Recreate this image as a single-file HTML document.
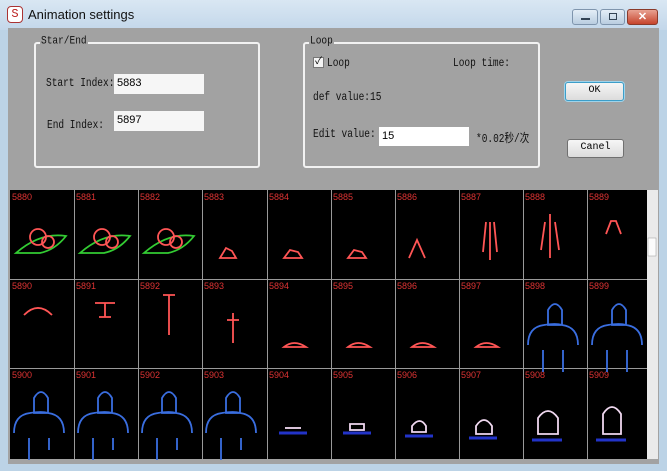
<!DOCTYPE html>
<html><head><meta charset="utf-8"><style>
*{margin:0;padding:0;box-sizing:border-box}
body{width:667px;height:471px;overflow:hidden;background:#bcd3e6;font-family:"Liberation Mono","Noto Sans CJK SC",monospace;position:relative}
.title{position:absolute;left:0;top:0;width:667px;height:30px;background:linear-gradient(#d9e7f3,#c3d7ea)}
.ttl{position:absolute;left:28px;top:7px;font:13px "Liberation Sans",sans-serif;color:#111}
.client{position:absolute;left:8px;top:28px;width:651px;height:436px;background:#a2a2a2}
.grp{position:absolute;border:2px solid #f2f2f2;border-radius:3px}
.lg{position:absolute;top:-9px;left:4px;background:#a2a2a2;font-size:9.5px;padding:0 1px;color:#111;transform:scaleY(1.2)}
.lbl{position:absolute;font-size:9.5px;color:#111;transform:scaleY(1.25);transform-origin:0 0;white-space:nowrap}
.inp{position:absolute;background:#f6f6f6;font:11px "Liberation Sans",sans-serif;padding:3px 3px}
.btn{position:absolute;background:linear-gradient(#f6f6f6,#dcdcdc);border:1px solid #707070;border-radius:3px;font-size:10px;text-align:center}
.wb{position:absolute;top:9px;height:16px;border:1px solid #7f95ad;border-radius:3px;background:linear-gradient(#e4eef7,#b9cde0)}
</style></head><body>
<div class="title"></div>
<div style="position:absolute;left:7px;top:6px;width:16px;height:17px;border:1px solid #a33;border-radius:4px;background:#fff;color:#b22;font-size:12px;text-align:center;line-height:15px">S</div>
<div class="ttl">Animation settings</div>
<div class="wb" style="left:572px;width:26px"><div style="position:absolute;left:8px;top:8px;width:9px;height:2px;background:#345"></div></div>
<div class="wb" style="left:600px;width:25px"><div style="position:absolute;left:8px;top:3px;width:8px;height:7px;border:1.5px solid #345"></div></div>
<div class="wb" style="left:627px;width:31px;background:linear-gradient(#e8a292,#c6442c);border-color:#8a3a2a;color:#fff;font:bold 11px 'Liberation Sans';text-align:center;line-height:14px">✕</div>
<div class="client"></div>
<div class="grp" style="left:34px;top:42px;width:226px;height:126px"><span class="lg">Star/End</span></div>
<div class="lbl" style="left:46px;top:76px">Start Index:</div>
<div class="inp" style="left:114px;top:74px;width:90px;height:20px">5883</div>
<div class="lbl" style="left:47px;top:118px">End Index:</div>
<div class="inp" style="left:114px;top:111px;width:90px;height:20px">5897</div>
<div class="grp" style="left:303px;top:42px;width:237px;height:126px"><span class="lg">Loop</span></div>
<div style="position:absolute;left:313px;top:57px;width:11px;height:11px;background:#f4f4f4;border:1px solid #777;font-size:10px;line-height:9px;text-align:center">✓</div>
<div class="lbl" style="left:327px;top:56px">Loop</div>
<div class="lbl" style="left:453px;top:56px">Loop time:</div>
<div class="lbl" style="left:313px;top:90px">def value:15</div>
<div class="lbl" style="left:313px;top:127px">Edit value:</div>
<div class="inp" style="left:379px;top:127px;width:90px;height:19px;background:#fff">15</div>
<div class="lbl" style="left:476px;top:128px">*0.02秒/次</div>
<div class="btn" style="left:565px;top:82px;width:59px;height:19px;line-height:16px;border-color:#3c9ec9;box-shadow:0 0 0 1px #9fd3ea">OK</div>
<div class="btn" style="left:567px;top:139px;width:57px;height:19px;line-height:16px">Canel</div>
<svg style="position:absolute;left:0;top:0" width="667" height="471">
<rect x="10" y="190" width="637" height="269" fill="#000"/>
<rect x="647" y="190" width="11" height="269" fill="#eaeaea"/>
<rect x="648" y="238" width="8" height="18" fill="#fbfbfb" stroke="#999" stroke-width="0.5"/>
<g stroke="#999" stroke-width="1">
<line x1="74.5" y1="190" x2="74.5" y2="459"/><line x1="138.5" y1="190" x2="138.5" y2="459"/><line x1="202.5" y1="190" x2="202.5" y2="459"/><line x1="267.5" y1="190" x2="267.5" y2="459"/><line x1="331.5" y1="190" x2="331.5" y2="459"/><line x1="395.5" y1="190" x2="395.5" y2="459"/><line x1="459.5" y1="190" x2="459.5" y2="459"/><line x1="523.5" y1="190" x2="523.5" y2="459"/><line x1="587.5" y1="190" x2="587.5" y2="459"/>
<line x1="10" y1="279.5" x2="647" y2="279.5"/><line x1="10" y1="368.5" x2="647" y2="368.5"/>
</g>
<g font-family="Liberation Sans" font-size="9" fill="#d33">
<text x="12" y="200">5880</text><text x="76" y="200">5881</text><text x="140" y="200">5882</text><text x="204" y="200">5883</text><text x="269" y="200">5884</text><text x="333" y="200">5885</text><text x="397" y="200">5886</text><text x="461" y="200">5887</text><text x="525" y="200">5888</text><text x="589" y="200">5889</text>
<text x="12" y="289">5890</text><text x="76" y="289">5891</text><text x="140" y="289">5892</text><text x="204" y="289">5893</text><text x="269" y="289">5894</text><text x="333" y="289">5895</text><text x="397" y="289">5896</text><text x="461" y="289">5897</text><text x="525" y="289">5898</text><text x="589" y="289">5899</text>
<text x="12" y="378">5900</text><text x="76" y="378">5901</text><text x="140" y="378">5902</text><text x="204" y="378">5903</text><text x="269" y="378">5904</text><text x="333" y="378">5905</text><text x="397" y="378">5906</text><text x="461" y="378">5907</text><text x="525" y="378">5908</text><text x="589" y="378">5909</text>
</g>
<g fill="none" stroke-width="1.8">
<g stroke="#3c3"><path d="M16 253 Q40 232 66 236 Q55 250 40 253 Z"/><path d="M80 253 Q104 232 130 236 Q119 250 104 253 Z"/><path d="M144 253 Q168 232 194 236 Q183 250 168 253 Z"/></g>
<g stroke="#f55">
<circle cx="38" cy="237" r="8"/><circle cx="48" cy="242" r="6"/><circle cx="102" cy="237" r="8"/><circle cx="112" cy="242" r="6"/><circle cx="166" cy="237" r="8"/><circle cx="176" cy="242" r="6"/>
<path d="M220 258 l6-10 l6 3 l4 7 z"/><path d="M284 258 l6-8 l8 2 l4 6 z"/><path d="M348 258 l6-8 l8 2 l4 6 z"/><path d="M409 258 l8-18 l8 18"/>
<path d="M490 222 v38 M486 222 l-3 30 M494 222 l3 30"/><path d="M550 214 v44 M545 222 l-4 28 M555 222 l4 28"/><path d="M606 234 l5-13 l5 0 l5 13"/>
<path d="M24 315 q14-14 28 0"/><path d="M95 303 h20 M105 303 v14 M99 317 h12"/><path d="M163 295 l12 0 M169 295 v40"/><path d="M233 313 v30 M227 320 h12"/>
<path d="M284 347 q10-8 22 0 z"/><path d="M348 347 q10-8 22 0 z"/><path d="M412 347 q10-8 22 0 z"/><path d="M476 347 q10-8 22 0 z"/>
</g>
<g stroke="#3a6ee0">
<path d="M528 345 q0-18 16-20 q12-2 18 0 q16 2 16 20 M543 350 v22 M563 350 v22 M548 310 q7-12 14 0 v15 h-14z"/>
<path d="M592 345 q0-18 16-20 q12-2 18 0 q16 2 16 20 M607 350 v22 M627 350 v22 M612 310 q7-12 14 0 v15 h-14z"/>
<path d="M14 433 q0-18 16-20 q12-2 18 0 q16 2 16 20 M29 438 v22 M49 438 v12 M34 398 q7-12 14 0 v15 h-14z"/>
<path d="M78 433 q0-18 16-20 q12-2 18 0 q16 2 16 20 M93 438 v22 M113 438 v12 M98 398 q7-12 14 0 v15 h-14z"/>
<path d="M142 433 q0-18 16-20 q12-2 18 0 q16 2 16 20 M157 438 v22 M177 438 v12 M162 398 q7-12 14 0 v15 h-14z"/>
<path d="M206 433 q0-18 16-20 q12-2 18 0 q16 2 16 20 M221 438 v22 M241 438 v12 M226 398 q7-12 14 0 v15 h-14z"/>
<path d="M279 433 h28 M343 433 h28 M405 436 h28 M469 438 h28 M532 440 h30 M596 440 h30" stroke-width="3" stroke="#2233c8"/>
</g>
<g stroke="#f0d8f0"><path d="M285 428 h16"/><path d="M350 424 h14 v6 h-14z"/><path d="M412 426 q8-10 14 0 v6 h-14z"/><path d="M476 426 q8-12 16 0 v8 h-16z"/><path d="M538 418 q10-14 20 0 v16 h-20z"/><path d="M603 414 q9-14 18 0 v20 h-18z"/></g>
</g>
</svg>
</body></html>
